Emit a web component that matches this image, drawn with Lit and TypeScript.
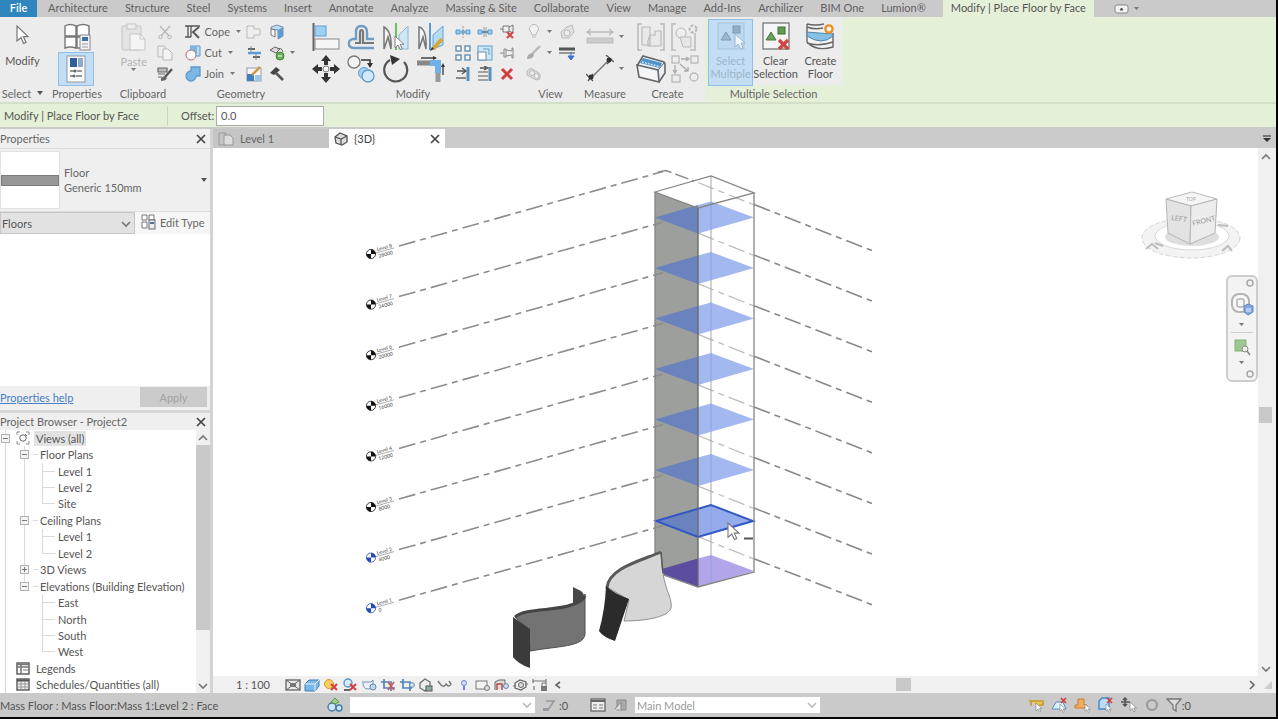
import { LitElement, html, css, svg, nothing } from "lit";
import { customElement } from "lit/decorators.js";
import { classMap } from "lit/directives/class-map.js";

const G = "#b9b9b9";
const B = "#5b9bd0";
const L = "#bcdcf3";

const cursor = (x: number, y: number, s = 1) => svg`
  <path transform="translate(${x} ${y}) scale(${s})" d="M0 0V13L3.4 10L5.8 15L8 14L5.7 9.2H10Z" fill="#fff" stroke="#777" stroke-width="1"/>`;

const icons: Record<string, [number, number, unknown]> = {
  arrow: [16, 20, svg`<path d="M3 1V16L7 12.5L9.6 18.5L12 17.4L9.4 11.6H14Z" fill="#fff" stroke="#777" stroke-width="1.2"/>`],
  typeProps: [28, 28, svg`
    <g fill="#fff" stroke="#777" stroke-width="1.4"><path d="M2 3Q7 0 13 3V13H2ZM14 3Q20 0 26 3V13H14ZM2 14H13V25Q7 23 2 25ZM14 14H20V25H14Z"/></g>
    <rect x="17" y="12" width="10" height="15" fill="#f4f4f4" stroke="#888"/><rect x="19" y="14" width="6" height="4" fill="#3f6fa8"/>
    <path d="M19 21H25M19 24H25" stroke="#999"/>`],
  props: [28, 28, svg`
    <rect x="5" y="1" width="18" height="26" fill="#fcfcfc" stroke="#8a99a8"/><rect x="8" y="3" width="7" height="9" fill="#2f5f9a"/>
    <rect x="16" y="3" width="5" height="9" fill="#8fa9c8"/><path d="M8 16H13M15 16H20M8 21H11M14 21H20" stroke="#777" stroke-width="1.4"/>
    <circle cx="13" cy="16" r="1.5" fill="#666"/><circle cx="12" cy="21" r="1.5" fill="#666"/>`],
  paste: [26, 28, svg`
    <rect x="1" y="3" width="19" height="24" rx="1" fill="#e3e3e3" stroke="#c4c4c4"/><rect x="6" y="1" width="9" height="5" fill="#ededed" stroke="#c4c4c4"/>
    <path d="M9 11H19L24 16V27H9Z" fill="#f4f4f4" stroke="#c6c6c6"/><path d="M19 11V16H24" fill="none" stroke="#c6c6c6"/>`],
  scissors: [16, 16, svg`<path d="M3 2L12 12M13 2L4 12" stroke="${G}" stroke-width="1.5"/><circle cx="3.5" cy="13" r="1.8" fill="none" stroke="${G}"/><circle cx="12.5" cy="13" r="1.8" fill="none" stroke="${G}"/>`],
  copyClip: [16, 16, svg`<path d="M1 1H8V12H1Z" fill="#eee" stroke="${G}"/><path d="M6 4H11L15 8V15H6Z" fill="#f4f4f4" stroke="${G}"/>`],
  match: [16, 16, svg`<path d="M1 2H10V6H1ZM1 8H8M1 11H5" fill="#bbb" stroke="#666" stroke-width="1.2"/><path d="M15 3L8 11" stroke="#555" stroke-width="2.4"/><path d="M8 10Q3 11 4 15Q9 15 10 12Z" fill="#666"/>`],
  cope: [16, 16, svg`<path d="M0 2H15M0 13H6" stroke="#555" stroke-width="1.3" fill="none"/><path d="M3 2V13M6 2V13" stroke="#555" stroke-width="1.3"/><path d="M14 3L8 8L14 14" fill="none" stroke="#555" stroke-width="1.8"/>`],
  cut: [16, 16, svg`<path d="M5 1H15V11H9" fill="${L}" stroke="${B}"/><path d="M5 1H12V8H5Z" fill="#7db5e0"/><circle cx="6" cy="10" r="5" fill="#fff" stroke="#a86f78"/>`],
  join: [16, 16, svg`<path d="M6 1H15V10H11A5 5 0 1 1 6 5Z" fill="#7db8e4" stroke="${B}" stroke-width="1.3"/>`],
  copeRemove: [16, 16, svg`<path d="M1 2H8V5H14V11H8V14H1Z" fill="#eee" stroke="${G}"/>`],
  beam: [16, 16, svg`<path d="M2 4H9M7 12H14" stroke="#666" stroke-width="2"/><path d="M2 8H15" stroke="${B}" stroke-width="2.4"/><path d="M5 1V7M10 9V15" stroke="#888"/>`],
  paint: [16, 16, svg`<rect x="1" y="2" width="14" height="13" fill="#f7f7f7" stroke="#999"/><path d="M1 8H8V15H1Z" fill="#3f7fc0"/><path d="M9 9H15V15H9Z" fill="#9cc8e8"/><path d="M6 9L14 1" stroke="#cf9a4c" stroke-width="2.6"/>`],
  wallOpen: [16, 16, svg`<path d="M2 3L8 1L14 3V12L9 15V6L2 5Z" fill="${L}" stroke="#7790a8"/><path d="M2 5L6 6V13L2 11Z" fill="#fff" stroke="#777"/><path d="M9 6L14 3V12L9 15Z" fill="#5d9dd4"/>`],
  splitFace: [16, 16, svg`<path d="M1 5L6 2L11 4L7 8Z" fill="#ddd" stroke="#666"/><circle cx="11" cy="11" r="4" fill="#69ad5b" stroke="#448a3c"/><path d="M8 4Q13 2 14 7" fill="none" stroke="#666"/><path d="M9 11H13" stroke="#fff"/>`],
  hammer: [16, 16, svg`<path d="M1 7L7 1L11 4L5 9Z" fill="#444"/><path d="M7 7L14 14" stroke="#555" stroke-width="2.6"/>`],
  align: [28, 28, svg`<path d="M1.5 0V28" stroke="#666" stroke-width="2"/><rect x="3" y="3" width="11" height="10" fill="#9fd0f2" stroke="${B}"/><rect x="3" y="16" width="24" height="10" fill="#f6f6f6" stroke="#888"/>`],
  offset: [28, 28, svg`<path d="M27 16H20V9Q20 3 14.500 3Q9 3 9 9V16H6Q1 17 2 22Q3 25 7 25H27" fill="none" stroke="#6f9dc4" stroke-width="2.4"/><path d="M27 20H16V10Q16 7 14.500 7Q13 7 13 10V20H8" fill="none" stroke="#777" stroke-width="2.200"/>`],
  mirrorPick: [28, 28, svg`<path d="M2 26V4Q10 8 9 26L6 14Z" fill="#f4f4f4" stroke="#777" stroke-width="1.5"/><path d="M26 26V3L17 12V26Z" fill="#cfe6f5" stroke="#8ab6d4"/><path d="M14 0V27" stroke="#6cbf5e" stroke-width="2"/>${cursor(13, 13, .9)}`],
  mirrorDraw: [28, 28, svg`<path d="M2 26V4Q10 6 9 26L6 14Z" fill="#f4f4f4" stroke="#777" stroke-width="1.5"/><path d="M26 22V3L16 12V26Z" fill="#b5dbf5" stroke="#5fa5da"/><path d="M13 0V27" stroke="${B}" stroke-width="2"/><path d="M16 26L25 16" stroke="#d9a637" stroke-width="4"/><path d="M13 28L15 24L17 26Z" fill="#333"/>`],
  move: [28, 28, svg`<path d="M14 0L19 6H16V10H12V6H9ZM14 28L19 22H16V18H12V22H9ZM0 14L6 9V12H10V16H6V19ZM28 14L22 9V12H18V16H22V19Z" fill="#333"/><circle cx="14" cy="14" r="3" fill="#fff" stroke="#777"/>`],
  copy: [28, 28, svg`<circle cx="7" cy="7" r="6" fill="#f5f5f5" stroke="#777" stroke-width="1.3"/><path d="M14 5H23V10" fill="none" stroke="#333" stroke-width="1.6"/><path d="M20 8H26L23 13Z" fill="#333"/><circle cx="17" cy="18" r="5.5" fill="#a9d2ef" stroke="${B}"/><circle cx="21" cy="21" r="6" fill="#d3e9f8" stroke="${B}" stroke-width="1.3"/>`],
  rotate: [28, 28, svg`<path d="M22 7A11.500 11.500 0 1 1 8 5" fill="none" stroke="#555" stroke-width="2.2"/><path d="M8 0L18 4L10 10Z" fill="#333"/>`],
  trim: [28, 28, svg`<path d="M0 8H15" stroke="#888" stroke-width="5"/><path d="M13 8H21V18" fill="none" stroke="#6db1e8" stroke-width="6"/><path d="M21 18V27" stroke="#999" stroke-width="5"/><path d="M4 3H18M26 10V20" stroke="#444" stroke-width="1.4"/><path d="M16 1L20 3L16 5ZM24 12L26 8L28 12Z" fill="#333"/>`],
  splitEl: [16, 16, svg`<path d="M1 6H5V10H1ZM11 6H15V10H11Z" fill="#9ccbed" stroke="${B}"/><path d="M8 2V14" stroke="#999" stroke-dasharray="2 1.5"/><path d="M5 8L8 5V11ZM11 8L8 5V11Z" fill="#7da7c8"/>`],
  splitGap: [16, 16, svg`<path d="M1 6H5V10H1ZM11 6H15V10H11Z" fill="#9ccbed" stroke="${B}"/><path d="M7 3V13M9 3V13" stroke="#999"/><path d="M5 8H11" stroke="#6a8da8" stroke-width="2"/>`],
  unpin: [16, 16, svg`<path d="M1 5H4V2H10V8H4V5M10 3L14 1V9L10 7" fill="#eee" stroke="#777"/><path d="M8 8L14 14M14 8L8 14" stroke="#d24848" stroke-width="2.2"/>`],
  array: [16, 16, svg`<g fill="#f4f8fb" stroke="#5a88ad" stroke-width="1.3"><rect x="1" y="1" width="5" height="5"/><rect x="10" y="1" width="5" height="5"/><rect x="1" y="10" width="5" height="5"/><rect x="10" y="10" width="5" height="5"/></g>`],
  scale: [16, 16, svg`<rect x="1" y="1" width="14" height="14" fill="#cfe7f6" stroke="#5aa0d0"/><rect x="1" y="7" width="8" height="8" fill="#fff" stroke="#6e8ca2"/><path d="M6 4H12V10" fill="none" stroke="#5aa0d0"/>`],
  pin: [16, 16, svg`<path d="M1 8H5M5 4H7V12H5ZM7 5L13 6V3H14V13H13V10L7 11" fill="#f1f1f1" stroke="#888"/>`],
  trimOne: [16, 16, svg`<path d="M13 1V15" stroke="#5a8fbd" stroke-width="3"/><path d="M1 12H11" stroke="#888" stroke-width="2"/><path d="M2 5H10M7 2L11 5L7 8" fill="none" stroke="#555" stroke-width="1.3"/>`],
  trimMulti: [16, 16, svg`<path d="M13 1V15" stroke="#5a8fbd" stroke-width="3"/><path d="M1 6H11M1 10H11M1 14H11" stroke="#888" stroke-width="1.6"/><path d="M3 2H9M7 0L11 2L7 4" fill="none" stroke="#555" stroke-width="1.3"/>`],
  del: [16, 16, svg`<path d="M3 3L13 13M13 3L3 13" stroke="#cf3f3f" stroke-width="3"/>`],
  bulb: [16, 16, svg`<path d="M6 11Q6 9 4 7A4.5 4.5 0 1 1 12 7Q10 9 10 11ZM6 13H10" fill="#f2f2f2" stroke="${G}"/>`],
  override: [16, 16, svg`<path d="M14 1L6 9" stroke="${G}" stroke-width="2.4"/><path d="M6 8Q1 9 1 14Q7 14 8 10Z" fill="#aaa"/>`],
  selBox: [16, 16, svg`<path d="M1 5L5 2L14 8V13L10 14L1 9Z" fill="#ddd" stroke="${G}"/><circle cx="6" cy="7" r="2.500" fill="#eee" stroke="${G}"/><circle cx="10.500" cy="10" r="2.500" fill="#eee" stroke="${G}"/>`],
  displace: [16, 16, svg`<path d="M2 8L8 3L13 1L15 8L10 14L3 14Z" fill="#e2e2e2" stroke="${G}"/><circle cx="8" cy="9" r="3" fill="#eee" stroke="${G}"/>`],
  linework: [16, 16, svg`<path d="M0 4H16" stroke="#555" stroke-width="3"/><path d="M0 8H16" stroke="#999" stroke-width="2"/><path d="M12 7V11M9 11H15L12 15Z" fill="#3a6ed0" stroke="#3a6ed0"/>`],
  measure: [28, 28, svg`<path d="M1 9H27M5 6L1 9L5 12M23 6L27 9L23 12" fill="none" stroke="${G}" stroke-width="1.3"/><rect x="1" y="15" width="26" height="5" fill="#ccc" stroke="#bbb"/>`],
  dim: [28, 28, svg`<path d="M5 23L23 5" stroke="#777" stroke-width="1.4"/><path d="M0 19L7 26M20 0L28 7M2 26L7 19M21 9L26 4" stroke="#555" stroke-width="1.3"/><circle cx="5" cy="22" r="2.5" fill="#333"/><circle cx="23" cy="5" r="2.5" fill="#333"/>`],
  group: [28, 28, svg`<path d="M5 1H1V27H5M23 1H27V27H23" fill="none" stroke="${G}" stroke-width="1.5"/><path d="M5 4H13V22H5ZM13 12H18V8H24V23H11V18Z" fill="#e9e9e9" stroke="${G}" stroke-width="1.2"/>`],
  similar: [28, 28, svg`<path d="M5 1H1V27H5M24 10V27H19" fill="none" stroke="${G}" stroke-width="1.5"/><circle cx="10" cy="10" r="5" fill="#eee" stroke="${G}"/><path d="M9 14H20V24H12Z" fill="#e6e6e6" stroke="${G}"/><circle cx="22" cy="6" r="3.5" fill="none" stroke="${G}" stroke-width="2" stroke-dasharray="3 1.5"/>`],
  assembly: [30, 28, svg`<path d="M1 11L7 1L28 7Q29 8 29 9V18L23 27" fill="#e8f0f6" stroke="#666" stroke-width="1.6"/><path d="M7 3L26 8L24 13L4 8Z" fill="#4f92ca"/><path d="M6 7L25 12" stroke="#bfe0f5" stroke-width="1.500" stroke-dasharray="2 1"/><path d="M1 10L22 15L23 27L3 22Z" fill="#f5f5f5" stroke="#666" stroke-width="1.6"/><path d="M22 15L28 8" stroke="#666"/>`],
  parts: [28, 28, svg`<g fill="#ededed" stroke="${G}" stroke-width="1.3"><rect x="1" y="1" width="7" height="7"/><rect x="20" y="1" width="7" height="7"/><rect x="1" y="20" width="8" height="7"/><circle cx="23" cy="22" r="4"/></g><path d="M10 4H18M4 10V18M9 9L17 16M15 2L18 4L15 6M2 15L4 18L6 15M17 12V16H13" fill="none" stroke="#aaa" stroke-width="1.3"/>`],
  selMulti: [28, 28, svg`<rect x="1" y="1" width="26" height="26" fill="#bcd9f0" stroke="#a5c3dc"/><path d="M4 18L9 10L14 18Z" fill="#9cb6cb" stroke="#7f9bb2"/><rect x="16" y="4" width="7" height="7" fill="#93aec4" stroke="#7f9bb2"/><path d="M18 12V25L21 22L24 27L26 26L24 21H28Z" fill="#eef5fb" stroke="#9db5c8"/>`],
  clearSel: [28, 28, svg`<rect x="1" y="1" width="26" height="26" fill="#f5f5f5" stroke="#777" stroke-width="1.3"/><path d="M4 18L9 10L14 18Z" fill="#6aa05b" stroke="#467b3b"/><rect x="16" y="5" width="7" height="7" fill="#5f9e52" stroke="#3d7234"/><path d="M17 18L26 27M26 18L17 27" stroke="#cf4646" stroke-width="3.4"/>`],
  floor: [28, 28, svg`<path d="M1 2Q9 4 18 2M1 2V20Q10 30 27 25V11M1 5Q9 8 17 6M1 21Q12 25 27 20" fill="#f3f3f3" stroke="#666" stroke-width="1.4"/><path d="M1 10Q12 11 27 12V14Q16 24 1 14Z" fill="#86bfe6" stroke="#5086ae"/><circle cx="23" cy="7" r="3.6" fill="#fff6e6" stroke="#e8902c" stroke-width="2.4"/>`],
  plan: [16, 14, svg`<path d="M1 1H8V13H1Z" fill="none" stroke="#999"/><path d="M6 3H12L15 6V13H6Z" fill="#ddd" stroke="#999"/>`],
  house: [14, 14, svg`<path d="M1 5L6 1L13 4V10L8 13L2 11Z" fill="#ddd" stroke="#555" stroke-width="1.3"/><path d="M1 5L7 7L13 4M7 7V12" fill="none" stroke="#555" stroke-width="1.3"/>`],
  editType: [16, 16, svg`<path d="M2 1H7V6H2ZM9 1H14V6H9ZM2 8H7V14H2Z" fill="#fff" stroke="#777"/><rect x="9" y="6" width="6" height="9" fill="#eee" stroke="#667"/><path d="M10 8H14V10H10Z" fill="#5270a0"/>`],
  close: [10, 10, svg`<path d="M1 1L9 9M9 1L1 9" stroke="#444" stroke-width="1.7"/>`],
  views: [14, 14, svg`<path d="M1 4V1H4M10 1H13V4M13 10V13H10M4 13H1V10" fill="none" stroke="#888"/><circle cx="7" cy="7" r="3.2" fill="none" stroke="#666"/><path d="M9 3L11 5" stroke="#666"/>`],
  sheet: [14, 13, svg`<rect x="1" y="1" width="12" height="11" fill="#fff" stroke="#555" stroke-width="1.4"/><path d="M1 2.5H13M1 5H13M5 2V12" stroke="#777" stroke-width="1.6"/><path d="M7 8H12" stroke="#777"/>`],
  grid: [14, 13, svg`<rect x="1" y="1" width="12" height="11" fill="#eee" stroke="#555" stroke-width="1.4"/><path d="M1 2.5H13" stroke="#555" stroke-width="2"/><path d="M5 3V12M9 3V12M1 6H13M1 9H13" stroke="#999"/>`],
  detail: [16, 14, svg`<rect x="1" y="2" width="14" height="10" fill="#e8e8e8" stroke="#555" stroke-width="1.2"/><path d="M1 2L15 12M15 2L1 12" stroke="#666"/><rect x="5" y="5" width="6" height="4" fill="#777"/>`],
  cube: [16, 14, svg`<path d="M1 6L5 2H15V8L11 13H1Z" fill="#7ab7e8" stroke="#3f7fb8"/><path d="M1 6H11L15 2M11 6V13" fill="none" stroke="#e4f2fb"/>`],
  sun: [16, 14, svg`<circle cx="6" cy="6" r="4.5" fill="#f5d060" stroke="#d49c34"/><path d="M8 6L14 12M14 6L8 12" stroke="#d23f3f" stroke-width="2"/>`],
  shadow: [16, 14, svg`<circle cx="6" cy="5" r="4" fill="#d6ebf8" stroke="#5a94c4" stroke-width="1.4"/><path d="M2 12H8" stroke="#666" stroke-width="2"/><path d="M8 6L14 12M14 6L8 12" stroke="#d23f3f" stroke-width="2"/>`],
  render: [16, 14, svg`<path d="M1 4H10L12 2V6Q12 11 7 11Q2 11 2 5" fill="#eef" stroke="#6c94b5"/><circle cx="12" cy="9" r="3" fill="#bcd9f2" stroke="#6688aa"/>`],
  crop: [16, 14, svg`<path d="M4 1V10H15M1 4H11V13" fill="none" stroke="#4f86bc" stroke-width="1.7"/><path d="M8 4L14 12M14 4L8 12" stroke="#d05555" stroke-width="1.7"/>`],
  cropShow: [16, 14, svg`<path d="M4 1V10H13M1 4H11V13" fill="none" stroke="#4f86bc" stroke-width="1.7"/><circle cx="13" cy="7" r="2.4" fill="#cfe3f5" stroke="#6688aa"/>`],
  lock3d: [16, 14, svg`<path d="M2 5L7 1L12 4V9L7 13L2 10Z" fill="#eee" stroke="#666" stroke-width="1.2"/><rect x="8" y="8" width="6" height="5" fill="#8fae9e" stroke="#555"/>`],
  glasses: [16, 14, svg`<path d="M1 3L4 7Q7 10 9 6Q12 10 14 6L12 3" fill="none" stroke="#777" stroke-width="1.4"/>`],
  reveal: [16, 14, svg`<circle cx="8" cy="5" r="2.500" fill="#d6defc" stroke="#6a83d0"/><path d="M8 8V12" stroke="#6a83d0" stroke-width="2"/>`],
  tempView: [16, 14, svg`<rect x="1" y="3" width="11" height="8" fill="#f2f2f2" stroke="#777"/><circle cx="12" cy="10" r="2.5" fill="#ddd" stroke="#777"/>`],
  analytic: [16, 14, svg`<path d="M1 12V4L5 2H11V10" fill="#ddd" stroke="#666"/><path d="M3 12V6H8V12" fill="none" stroke="#b44" stroke-width="1.4"/><circle cx="12" cy="8" r="2.5" fill="#cde" stroke="#68a"/>`],
  highlight: [16, 14, svg`<path d="M2 5L7 2L13 4V9L8 12L2 10Z" fill="#eee" stroke="#666" stroke-width="1.3"/><circle cx="8" cy="7" r="2.500" fill="#ddd" stroke="#666"/><path d="M0 8H3M12 6H15" stroke="#777"/>`],
  constraint: [16, 14, svg`<path d="M1 1V5M1 3H14M14 1V5M2 8V12" stroke="#777" stroke-width="1.2"/><rect x="9" y="8" width="6" height="5" fill="#777"/><path d="M10 8V5H14V8" fill="none" stroke="#777"/>`],
  worksets: [16, 16, svg`<circle cx="5" cy="10" r="4" fill="#cfe4f5" stroke="#3f7cac" stroke-width="1.4"/><circle cx="12" cy="11" r="3" fill="#cfe4f5" stroke="#3f7cac" stroke-width="1.4"/><path d="M4 5L8 1L12 5L8 7Z" fill="#9ecf8b" stroke="#5b9a48"/>`],
  editable: [14, 14, svg`<path d="M4 3H12L6 12H1" fill="none" stroke="#999" stroke-width="1.6"/><path d="M1 10H6V13H1Z" fill="#999"/>`],
  table: [16, 14, svg`<rect x="1" y="1" width="14" height="12" fill="#eee" stroke="#666" stroke-width="1.3"/><path d="M1 3H15" stroke="#666" stroke-width="2"/><path d="M3 7H7M3 10H7M9 7H13M9 10H13" stroke="#777"/>`],
  option: [14, 14, svg`<path d="M3 2H12V12H3Z" fill="#aaa" stroke="#888"/><path d="M1 11L7 4V12" fill="#ddd" stroke="#888"/>`],
  selLinks: [18, 16, svg`<path d="M1 4H15V8H11M3 4V9" fill="#e8c652" stroke="#c69a28" stroke-width="1.6"/>${cursor(8, 6, .6)}`],
  selUnder: [18, 16, svg`<path d="M1 12L5 5H12L15 12Z" fill="#dcedfa" stroke="#5b8fbd"/><path d="M10 1L15 6M15 1L10 6" stroke="#d04040" stroke-width="1.7"/>${cursor(9, 7, .55)}`],
  selPinned: [18, 16, svg`<path d="M4 2H10V8H13V11H1V8H4Z" fill="#f0ae64" stroke="#c87c2e"/>${cursor(11, 7, .55)}`],
  selFace: [18, 16, svg`<path d="M2 4L5 1H12V12H2Z" fill="#bcdcf6" stroke="#4389c8" stroke-width="1.4"/><path d="M10 1L15 6M15 1L10 6" stroke="#d04040" stroke-width="1.7"/>${cursor(9, 7, .55)}`],
  dragSel: [18, 16, svg`<path d="M1 5H10M5 1V9M3 3L5 1L7 3M3 7L5 9L7 7" fill="none" stroke="#555" stroke-width="1.5"/>${cursor(10, 5, .65)}`],
  ring: [18, 16, svg`<circle cx="9" cy="8" r="5" fill="none" stroke="#999" stroke-width="2.2"/>`],
  funnel: [16, 16, svg`<path d="M1 2H15L10 8V14L7 12V8Z" fill="#ddd" stroke="#777" stroke-width="1.3"/>`],
  wheel: [24, 26, svg`<rect x="2" y="2" width="17" height="18" rx="7" fill="#f7f7f7" stroke="#b4b4b4" stroke-width="2"/><rect x="7" y="7" width="7" height="8" rx="2" fill="none" stroke="#b4b4b4" stroke-width="1.6"/><path d="M14 14L18 12L23 14V20L18 23L14 20Z" fill="#7fa9e0" stroke="#5f86c0"/><path d="M16 16H21V20H16Z" fill="#b4cff2"/>`],
  zoomRegion: [18, 18, svg`<rect x="2" y="2" width="11" height="11" fill="#9cc78e" stroke="#84b275"/><circle cx="12" cy="11" r="3" fill="#eef3ee" stroke="#888"/><path d="M14 13L17 17" stroke="#888" stroke-width="1.6"/>`],
  ribbonMode: [16, 10, svg`<rect x="1" y="1" width="13" height="8" rx="2" fill="#f3f3f3" stroke="#888"/><path d="M6 6L7.500 4L9 6Z" fill="#555" stroke="#555"/>`],
  chevD: [10, 8, svg`<path d="M1 2L5 6L9 2" fill="none" stroke="#777" stroke-width="1.6"/>`],
  chevU: [10, 8, svg`<path d="M1 6L5 2L9 6" fill="none" stroke="#777" stroke-width="1.6"/>`],
  chevR: [8, 10, svg`<path d="M2 1L6 5L2 9" fill="none" stroke="#666" stroke-width="1.6"/>`],
  chevL: [8, 10, svg`<path d="M6 2L2 5L6 8" fill="none" stroke="#666" stroke-width="1.6"/>`],
  caret: [6, 4, svg`<path d="M0 0H6L3 4Z" fill="#555"/>`],
  tinyCaret: [6, 4, svg`<path d="M0 0H5L2.500 3Z" fill="#777"/>`],
  caretBar: [8, 8, svg`<path d="M0 1H8" stroke="#555" stroke-width="1.4"/><path d="M0 3H8L4 7Z" fill="#333"/>`],
  dot: [8, 8, svg`<circle cx="4" cy="4" r="3" fill="none" stroke="#aaa" stroke-width="1.6"/>`],
  grip: [10, 10, svg`<path d="M9 1V9H1Z" fill="#ccc"/>`],
};

const icon = (name: string) => {
  const [w, h, body] = icons[name];
  return html`<svg width=${w} height=${h} viewBox="0 0 ${w} ${h}" aria-hidden="true">${body}</svg>`;
};

const shared = css`
  :host, * { box-sizing: border-box; }
  svg { display: block; flex: none; }
  button, input, select { font: inherit; color: inherit; margin: 0; }
  button { display: flex; align-items: center; justify-content: center; padding: 0; border: 0; background: none; }
`;

@customElement("ribbon-bar")
class RibbonBar extends LitElement {
  static styles = [shared, css`
    :host { display: block; background: #e4f0d8; flex: none; }
    .tabs { display: flex; height: 17px; background: #cbcacb; color: #5f5f5f; }
    .tab { padding: 0 9px 0 8px; line-height: 15px; padding-bottom: 2px; white-space: nowrap; }
    .file { width: 37px; margin-right: 3px; padding: 0 0 2px; background: #2f86bf; color: #fff; font-weight: 600; }
    .active { margin-left: 8px; padding: 0 8px 2px; background: #e4f0d8; color: #555; }
    .mode { margin-left: 20px; gap: 4px; }
    .panels { display: flex; height: 87px; border-bottom: 2px solid #d3dfc8; }
    .panel { display: flex; flex-direction: column; background: #ececec; }
    .body { display: flex; flex: 1; justify-content: center; padding-top: 4px; }
    .title { display: flex; align-items: center; justify-content: center; gap: 6px; height: 18px; color: #666; white-space: nowrap; }
    .select { width: 45px; } .properties { width: 64px; } .clipboard { width: 68px; }
    .clipboard .body { justify-content: flex-end; }
    .geometry { width: 128px; } .modify { width: 216px; } .view { width: 59px; }
    .measure { width: 50px; } .create { width: 75px; }
    .green { background: #e4f0d8; }
    .green .body { background: #ececec; margin: 0 0 0 4px; gap: 1px; justify-content: flex-start; padding-top: 3px; }
    .multi { width: 137px; }
    .tall { flex-direction: column; justify-content: flex-start; line-height: 13px; color: #555; padding-top: 2px; }
    .tall svg { margin-bottom: 4px; }
    .tall.arrow svg { margin: 2px 0 9px; }
    .dim { color: #b4b4b4; }
    .on { background: #c3def4; outline: 1px solid #8fbfe6; color: #9db5c8; }
    .b46 { width: 45px; height: 65px; }
    .stack { display: grid; grid-auto-rows: 32px; grid-template-columns: 36px; }
    .on.sq { width: 34px; height: 32px; }
    .small { display: grid; grid-auto-rows: 21px; grid-auto-flow: row; align-content: start; }
    .c1 { grid-template-columns: 22px; margin-left: 8px; }
    .c1 button { justify-content: flex-end; padding-right: 4px; }
    .c2 { grid-template-columns: 33px 16px; }
    .c3 { grid-template-columns: repeat(3, 22px); margin-left: 4px; }
    .big4 { display: grid; grid-template-columns: repeat(4, 35px); grid-auto-rows: 32px; }
    .big2 { display: grid; grid-template-columns: repeat(2, 34px); grid-auto-rows: 32px; }
    .big1 { display: grid; grid-template-columns: 44px; grid-auto-rows: 32px; }
    .cell { gap: 5px; }
    .named { justify-content: flex-start; gap: 4px; color: #666; width: 64px; padding-left: 3px; }
    .named svg:last-child { margin-left: 2px; }
    .c3g { grid-template-columns: 23px 32px; }
    .c3g .cell, .c2 .cell { justify-content: flex-start; }
  `];

  private b(names: string[], label: string, cls = "cell") {
    return html`<button class=${cls} title=${label} aria-label=${label}>${names.map(icon)}</button>`;
  }

  render() {
    const tabs = ["Architecture", "Structure", "Steel", "Systems", "Insert", "Annotate", "Analyze", "Massing & Site",
      "Collaborate", "View", "Manage", "Add-Ins", "Archilizer", "BIM One", "Lumion®"];
    return html`
      <nav class="tabs">
        <button class="tab file">File</button>
        ${tabs.map(t => html`<button class="tab">${t}</button>`)}
        <button class="tab active">Modify | Place Floor by Face</button>
        <button class="mode" aria-label="Ribbon display">${icon("ribbonMode")}${icon("tinyCaret")}</button>
      </nav>
      <div class="panels">
        <section class="panel select">
          <div class="body"><button class="tall arrow">${icon("arrow")}Modify</button></div>
          <div class="title">Select ${icon("caret")}</div>
        </section>
        <section class="panel properties">
          <div class="body stack">${this.b(["typeProps"], "Type Properties")}${this.b(["props"], "Properties", "on sq")}</div>
          <div class="title">Properties</div>
        </section>
        <section class="panel clipboard">
          <div class="body">
            <button class="tall dim">${icon("paste")}Paste${icon("tinyCaret")}</button>
            <div class="small c1">${this.b(["scissors"], "Cut")}${this.b(["copyClip"], "Copy")}${this.b(["match"], "Match Type")}</div>
          </div>
          <div class="title">Clipboard</div>
        </section>
        <section class="panel geometry">
          <div class="body">
            <div class="small">
              ${[["cope", "Cope"], ["cut", "Cut"], ["join", "Join"]].map(([i, t]) => html`
                <button class="named">${icon(i)}${t}${icon("tinyCaret")}</button>`)}
            </div>
            <div class="small c3g">
              ${this.b(["copeRemove"], "Remove Coping")}${this.b(["wallOpen"], "Wall Joins")}
              ${this.b(["beam"], "Beam Joins")}${this.b(["splitFace", "tinyCaret"], "Split Face")}
              ${this.b(["paint"], "Paint")}${this.b(["hammer"], "Demolish")}
            </div>
          </div>
          <div class="title">Geometry</div>
        </section>
        <section class="panel modify">
          <div class="body">
            <div class="big4">
              ${["align", "offset", "mirrorPick", "mirrorDraw", "move", "copy", "rotate", "trim"].map(i => this.b([i], i))}
            </div>
            <div class="small c3">
              ${["splitEl", "splitGap", "unpin", "array", "scale", "pin", "trimOne", "trimMulti", "del"].map(i => this.b([i], i))}
            </div>
          </div>
          <div class="title">Modify</div>
        </section>
        <section class="panel view">
          <div class="body"><div class="small c2">
            ${this.b(["bulb", "tinyCaret"], "Hide")}${this.b(["displace"], "Displace")}
            ${this.b(["override", "tinyCaret"], "Override")}${this.b(["linework"], "Linework")}
            ${this.b(["selBox"], "Selection Box")}
          </div></div>
          <div class="title">View</div>
        </section>
        <section class="panel measure">
          <div class="body"><div class="big1">${this.b(["measure", "tinyCaret"], "Measure")}${this.b(["dim", "tinyCaret"], "Dimension")}</div></div>
          <div class="title">Measure</div>
        </section>
        <section class="panel create">
          <div class="body"><div class="big2">
            ${this.b(["group"], "Group")}${this.b(["similar"], "Similar")}${this.b(["assembly"], "Assembly")}${this.b(["parts"], "Parts")}
          </div></div>
          <div class="title">Create</div>
        </section>
        <section class="panel green multi">
          <div class="body">
            <button class="tall on b46">${icon("selMulti")}Select<br>Multiple</button>
            <button class="tall b46">${icon("clearSel")}Clear<br>Selection</button>
            <button class="tall b46">${icon("floor")}Create<br>Floor</button>
          </div>
          <div class="title">Multiple Selection</div>
        </section>
      </div>`;
  }
}

@customElement("properties-palette")
class PropertiesPalette extends LitElement {
  static styles = [shared, css`
    :host { display: flex; flex-direction: column; min-height: 0; background: #efefef; color: #666; border-bottom: 3px solid #d6d6d6; }
    .head { display: flex; align-items: center; justify-content: space-between; height: 19px; padding: 0 4px 0 0; }
    .type { display: flex; align-items: center; height: 64px; gap: 4px; padding-right: 3px; border: solid #dcdcdc; border-width: 1px 0; }
    .thumb { display: flex; align-items: center; width: 60px; height: 58px; background: #fff; border: 1px solid #e2e2e2; }
    .slab { width: 100%; height: 11px; background: #969696; border: 1px solid #7c7c7c; }
    .name { flex: 1; line-height: 15px; }
    .filter { display: flex; gap: 5px; height: 22px; background: #f6f6f6; }
    .pick { position: relative; display: flex; width: 135px; }
    select { appearance: none; width: 100%; padding: 0 1px; background: #e2e2e2; border: 1px solid #c6c6c6; border-radius: 0; color: #555; }
    .pick svg { position: absolute; right: 4px; top: 8px; }
    .edit { gap: 4px; padding-bottom: 2px; }
    .list { flex: 1; min-height: 0; background: #fff; }
    .foot { display: flex; align-items: center; justify-content: space-between; height: 24px; padding: 0 3px 2px 0; }
    .foot button { width: 67px; height: 20px; background: #cbcbcb; color: #a2a2a2; }
    a { color: #4a7fc4; }
  `];
  render() {
    return html`
      <div class="head">Properties<button aria-label="Close">${icon("close")}</button></div>
      <div class="type">
        <div class="thumb"><div class="slab"></div></div>
        <div class="name">Floor<br>Generic 150mm</div>
        <button aria-label="Type selector">${icon("caret")}</button>
      </div>
      <div class="filter">
        <label class="pick"><select aria-label="Category"><option>Floors</option></select>${icon("chevD")}</label>
        <button class="edit">${icon("editType")}Edit Type</button>
      </div>
      <div class="list"></div>
      <div class="foot"><a href="#help">Properties help</a><button disabled>Apply</button></div>`;
  }
}

type Row = { d: number; t: string; box?: "-" | "+"; i?: string; sel?: boolean; last?: boolean };

@customElement("project-browser")
class ProjectBrowser extends LitElement {
  static styles = [shared, css`
    :host { display: flex; flex-direction: column; min-height: 0; background: #efefef; color: #555; }
    .head { display: flex; align-items: center; justify-content: space-between; height: 17px; padding-right: 4px; color: #666; }
    .wrap { display: flex; flex: 1; min-height: 0; background: #fff; }
    .tree { flex: 1; min-width: 0; display: grid; grid-auto-rows: 1fr; margin: 0; padding: 0; list-style: none; }
    .row { display: flex; align-items: center; white-space: nowrap; line-height: 15px; }
    .unit, .stem { align-self: stretch; flex: none; display: flex; align-items: center; justify-content: center;
      background: linear-gradient(#dadada, #dadada) 9px 0 / 1px 100% no-repeat; }
    .unit { width: 18px; margin-left: 4px; }
    .unit.none { background: none; }
    .unit.first { width: 11px; margin: 0; background-position: 5px 0; }
    .unit.half { background-size: 1px 50%; }
    .stem { width: 14px; margin-left: 9px; background:
      linear-gradient(#dadada, #dadada) 0 0 / 1px 100% no-repeat, linear-gradient(#dadada, #dadada) 0 50% / 13px 1px no-repeat; }
    .stem.half { background-size: 1px 50%, 13px 1px; }
    .box { width: 9px; height: 9px; border: 1px solid #b0b0b0; background: #f4f4f4; display: grid; place-items: center; }
    .box path { stroke: #777; }
    .tick { width: 5px; height: 1px; background: #dadada; }
    .icon { margin: 0 4px 0 5px; }
    .text, .sel { padding: 0 2px; }
    .sel { background: #e2e2e2; }
    .bar { display: flex; flex-direction: column; align-items: center; width: 14px; background: #f0f0f0; padding: 4px 0 3px; gap: 3px; }
    .track { flex: 1; width: 100%; }
    .thumb { height: 79%; background: #c9c9c9; }
  `];
  private rows: Row[] = [
    { d: 0, t: "Views (all)", box: "-", i: "views", sel: true },
    { d: 1, t: "Floor Plans", box: "-" }, { d: 2, t: "Level 1" }, { d: 2, t: "Level 2" }, { d: 2, t: "Site", last: true },
    { d: 1, t: "Ceiling Plans", box: "-" }, { d: 2, t: "Level 1" }, { d: 2, t: "Level 2", last: true },
    { d: 1, t: "3D Views", box: "+" }, { d: 1, t: "Elevations (Building Elevation)", box: "-", last: true },
    { d: 2, t: "East" }, { d: 2, t: "North" }, { d: 2, t: "South" }, { d: 2, t: "West", last: true },
    { d: 0, t: "Legends", i: "sheet" }, { d: 0, t: "Schedules/Quantities (all)", i: "grid" },
  ];
  private box(k: string) {
    return html`<span class="box"><svg width="7" height="7" viewBox="0 0 7 7"><path d=${k === "+" ? "M1 3.5H6M3.5 1V6" : "M1 3.5H6"}/></svg></span>`;
  }
  render() {
    return html`
      <div class="head">Project Browser - Project2<button aria-label="Close">${icon("close")}</button></div>
      <div class="wrap">
        <ul class="tree">
          ${this.rows.map((r, n) => html`<li class="row">
            <span class="unit first">${r.d === 0 && r.box ? this.box(r.box) : nothing}</span>
            ${r.d === 0 ? html`<span class="icon">${icon(r.i!)}</span>` : nothing}
            ${r.d === 1 ? html`<span class=${classMap({ unit: true, half: !!r.last })}>${this.box(r.box!)}</span><span class="tick"></span>` : nothing}
            ${r.d === 2 ? html`<span class=${classMap({ unit: true, none: n > 8 })}></span>
              <span class=${classMap({ stem: true, half: !!r.last })}></span>` : nothing}
            <span class=${r.sel ? "sel" : "text"}>${r.t}</span></li>`)}
        </ul>
        <div class="bar">${icon("chevU")}<div class="track"><div class="thumb"></div></div>${icon("chevD")}</div>
      </div>`;
  }
}

@customElement("model-view")
class ModelView extends LitElement {
  static styles = [shared, css`
    :host { display: flex; flex-direction: column; min-width: 0; min-height: 0; }
    .docs { display: flex; height: 19px; background: #cbcbcb; color: #666; padding-right: 5px; }
    .doc { display: flex; align-items: center; justify-content: flex-start; gap: 6px; width: 116px; padding: 0 5px; background: #c5c5c5; }
    .open { background: #fff; color: #444; }
    .open .label { flex: 1; }
    .fill { flex: 1; }
    .main { display: flex; flex: 1; min-height: 0; background: #fff; }
    .canvas { position: relative; flex: 1; min-width: 0; }
    .scene { width: 100%; height: 100%; }
    .nav { position: absolute; right: 0; top: 127px; width: 32px; height: 107px; display: flex; flex-direction: column; align-items: center;
      justify-content: space-between; padding: 2px 0; background: #f3f3f3; border: 2px solid #cdcdcd; border-radius: 6px; }
    .nav .end { align-self: flex-end; padding-right: 2px; }
    .rule { width: 22px; height: 1px; background: #ccc; }
    .vbar { display: flex; flex-direction: column; align-items: center; width: 18px; background: #f0f0f0; padding: 5px 3px 3px 0; }
    .up { flex: 244; } .down { flex: 240; }
    .vthumb { width: 13px; height: 16px; background: #c8c8c8; }
    .controls { display: flex; align-items: center; height: 17px; padding: 0 3px 0 23px; background: #f0f0f0; color: #555; }
    .scale { width: 49px; justify-content: flex-start; white-space: nowrap; }
    .tools { display: flex; gap: 3px; }
    .left { flex: 343; margin-left: 6px; } .right { flex: 338; }
    .hthumb { width: 15px; height: 13px; background: #c8c8c8; }
    .grip { margin-left: 7px; }
    .tiny { font-size: 5px; fill: #444; }
    .face { font-size: 7px; fill: #999; }
  `];

  private level(n: number) {
    const y = 254 + n * 50.6;
    const c = n > 5 ? "#2549b8" : "#111";
    const peak = y - 83.500;
    const dash = "17 5 6 5";
    return svg`
      <circle cx="371" cy=${y} r="4.6" fill="#fff" stroke=${c} stroke-width=".8"/>
      <path d="M371 ${y}V${y - 4.6}A4.600 4.600 0 0 1 375.600 ${y}ZM371 ${y}V${y + 4.6}A4.600 4.600 0 0 1 366.400 ${y}Z" fill=${c}/>
      <path d="M376 ${y - 1}L394 ${y - 6}" stroke="#999" stroke-width=".8"/>
      <g transform="rotate(-15 378 ${y})"><text class="tiny" x="378" y=${y - 3}>Level ${8 - n}</text><text class="tiny" x="378" y=${y + 4}>${(7 - n) * 4000}</text></g>
      <path d="M399 ${y - 8}L663 ${peak + 1}" stroke="#8c8c8c" stroke-width="1.6" stroke-dasharray=${dash}/>
      ${n === 0 ? svg`<path d="M658 172L666 170.500L694 181" fill="none" stroke="#8c8c8c" stroke-width="1.5" stroke-dasharray="14 4"/>` : nothing}
      <path d="M698 ${peak + 12}L753 ${peak + 34}" stroke="#bcbcbc" stroke-width="1.300" stroke-dasharray=${dash}/>
      <path d="M754 ${peak + 34}L872 ${peak + 80}" stroke="#888" stroke-width="1.6" stroke-dasharray=${dash}/>`;
  }

  private slab(y: number, kind = "") {
    const left = kind === "base" ? "#5d4da0" : "#6a82bd";
    const right = kind === "base" ? "#b3a5e9" : kind ? "#94aceb" : "#a3b8ee";
    return svg`
      <path d="M655 ${y}L698 ${y - 12.5}V${y + 16}Z" fill=${left}/>
      <path d="M698 ${y - 12.5}L711 ${y - 16}L754 ${y}L698 ${y + 16}Z" fill=${right}/>
      <path d="M711 ${y - 16}V${y + 12}" stroke="#8ba0d8" stroke-width=".8"/>
      ${kind === "sel" ? svg`<path d="M656 ${y}L711 ${y - 16}L753 ${y}L698 ${y + 16}Z" fill="none" stroke="#3158c4" stroke-width="2"/>` : nothing}`;
  }

  render() {
    const tools = ["detail", "cube", "sun", "shadow", "render", "crop", "cropShow", "lock3d", "glasses", "reveal", "tempView", "analytic", "highlight", "constraint"];
    const n8 = [0, 1, 2, 3, 4, 5, 6, 7];
    return html`
      <div class="docs">
        <button class="doc">${icon("plan")}Level 1</button>
        <div class="doc open">${icon("house")}<span class="label">{3D}</span><button aria-label="Close view">${icon("close")}</button></div>
        <span class="fill"></span>
        <button aria-label="View list">${icon("caretBar")}</button>
      </div>
      <div class="main">
        <div class="canvas">
          <svg class="scene" viewBox="213 148 1045 528" role="img" aria-label="3D model view">
            <path d="M655 192L698 208V587L655 572Z" fill="#9d9f9d"/>
            ${n8.map(n => this.level(n))}
            <path d="M711 176V555" stroke="#a5a5a5"/>
            ${n8.slice(0, 6).map(n => this.slab(217.5 + n * 50.5))}
            ${this.slab(521, "sel")}${this.slab(571, "base")}
            <path d="M655 192L711 176L754 193L698 208ZM655 192V572L698 587L754 572V193" fill="none" stroke="#858585" stroke-width="1.300"/>
            <path d="M698 208V587" stroke="#6c6c6c" stroke-width="1.4"/>
            <path d="M744 538.500H753" stroke="#555" stroke-width="2"/>
            ${cursor(728, 523, 1.1)}
            <path d="M573 587L581 591Q585 594 585 602L573 608Z" fill="#484848"/>
            <path d="M515 617C524 608 556 611 571 605Q584 602 585 594V634C584 647 558 646 530 651L529 630Z" fill="#737373" stroke="#4e4e4e"/>
            <path d="M515 617C524 608 556 611 571 605Q582 602 585 596" fill="none" stroke="#454545" stroke-width="3"/>
            <path d="M513 617L530 629V668Q518 664 513 657Z" fill="#3b3b3b"/>
            <path d="M661 552C662 590 673 596 671 608C668 618 642 621 624 621L629 600L607 587C613 567 640 560 661 552Z" fill="#d6d6d6" stroke="#8f8f8f"/>
            <path d="M661 552C643 560 608 568 607 588" fill="none" stroke="#595959" stroke-width="3"/>
            <path d="M661 552L663 573" stroke="#595959" stroke-width="1.500"/>
            <path d="M606 586Q613 593 629 599L615 641Q603 637 599 631Q605 610 606 586Z" fill="#2b2b2b"/>
            <ellipse cx="1191" cy="238" rx="49" ry="20" fill="#f3f3f3" stroke="#d4d4d4" stroke-dasharray="5 2"/>
            <ellipse cx="1192" cy="236" rx="37" ry="14" fill="#fff" stroke="#d8d8d8"/>
            <ellipse cx="1192" cy="237" rx="27" ry="9" fill="#dedede"/>
            <path d="M1166 199L1192 192L1217 199L1191 206Z" fill="#f5f5f5" stroke="#bbb"/>
            <path d="M1166 199L1191 206L1190 244L1168 233Z" fill="#e3e3e3" stroke="#b5b5b5"/>
            <path d="M1191 206L1217 199L1215 233L1190 244Z" fill="#ececec" stroke="#b5b5b5"/>
            <text x="1186" y="201" font-size="5" fill="#aaa">TOP</text>
            <text class="face" x="1171" y="220" transform="rotate(8 1171 220)">LEFT</text>
            <text class="face" x="1193" y="226" transform="rotate(-14 1193 226)">FRONT</text>
            <path d="M1146 249L1152 244L1158 249M1155 243L1163 246M1222 251L1228 246L1232 251M1218 225L1228 226" fill="none" stroke="#bdbdbd" stroke-width="2"/>
          </svg>
          <div class="nav">
            <button class="end" aria-label="Close navigation bar">${icon("dot")}</button>
            <button aria-label="Steering wheel">${icon("wheel")}</button>${icon("tinyCaret")}
            <span class="rule"></span>
            <button aria-label="Zoom region">${icon("zoomRegion")}</button>${icon("tinyCaret")}
            <button class="end" aria-label="Navigation options">${icon("dot")}</button>
          </div>
        </div>
        <div class="vbar">${icon("chevU")}<span class="up"></span><span class="vthumb"></span><span class="down"></span>${icon("chevD")}</div>
      </div>
      <div class="controls">
        <button class="scale">1 : 100</button>
        <div class="tools">${tools.map(t => html`<button aria-label=${t}>${icon(t)}</button>`)}</div>
        <span class="tools left">${icon("chevL")}</span>
        <span class="hthumb"></span><span class="right"></span>${icon("chevR")}
        <span class="grip">${icon("grip")}</span>
      </div>`;
  }
}

@customElement("app-root")
class AppRoot extends LitElement {
  static styles = [shared, css`
    :host { display: flex; flex-direction: column; height: 100vh; overflow: hidden; background: #efefef; color: #555;
      border: solid #050505; border-width: 0 2px 2px 0; font-family: Lato, "Open Sans", sans-serif; font-size: 11px; }
    .options { display: flex; align-items: center; height: 25px; background: #e4f0d8; border-bottom: 2px solid #cacaca; flex: none; }
    .mode { width: 168px; padding-left: 4px; border-right: 1px solid #c9d5be; line-height: 20px; white-space: nowrap; }
    .offset { display: flex; align-items: center; padding-left: 13px; }
    .offset span { width: 35px; }
    .offset input { width: 108px; height: 20px; padding: 0 4px; border: 1px solid #a9a9a9; background: #fff; }
    .work { display: grid; grid-template-columns: 213px minmax(0, 1fr); flex: 1; min-height: 0; }
    .side { display: grid; grid-template-rows: 284fr 280fr; min-height: 0; border-right: 3px solid #d3d3d3; }
    .status { display: flex; align-items: center; height: 24px; flex: none; background: #cacaca; white-space: nowrap; }
    .msg { width: 327px; }
    .field { position: relative; display: flex; height: 16px; margin-left: 7px; }
    .field select { appearance: none; width: 185px; padding: 0 2px; border: 0; border-radius: 0; background: #fff; color: #999; }
    .field svg { position: absolute; right: 3px; top: 4px; opacity: .5; }
    .count { display: flex; align-items: center; gap: 3px; width: 48px; margin-left: 7px; }
    .opt { display: flex; gap: 8px; }
    .end { display: flex; align-items: center; gap: 5px; margin-left: auto; padding-right: 85px; }
  `];
  render() {
    return html`
      <ribbon-bar></ribbon-bar>
      <div class="options">
        <div class="mode">Modify | Place Floor by Face</div>
        <label class="offset"><span>Offset:</span><input type="text" value="0.0"></label>
      </div>
      <div class="work">
        <div class="side"><properties-palette></properties-palette><project-browser></project-browser></div>
        <model-view></model-view>
      </div>
      <footer class="status">
        <span class="msg">Mass Floor : Mass Floor:Mass 1:Level 2 : Face</span>
        <button aria-label="Worksets">${icon("worksets")}</button>
        <label class="field"><select aria-label="Active workset"><option></option></select>${icon("chevD")}</label>
        <span class="count">${icon("editable")} :0</span>
        <div class="opt"><button aria-label="Design options">${icon("table")}</button><button aria-label="Active option">${icon("option")}</button></div>
        <label class="field"><select aria-label="Design option"><option>Main Model</option></select>${icon("chevD")}</label>
        <div class="end">
          ${["selLinks", "selUnder", "selPinned", "selFace", "dragSel", "ring"].map(i => html`<button aria-label=${i}>${icon(i)}</button>`)}
          <button aria-label="Filter">${icon("funnel")}:0</button>
        </div>
      </footer>`;
  }
}
